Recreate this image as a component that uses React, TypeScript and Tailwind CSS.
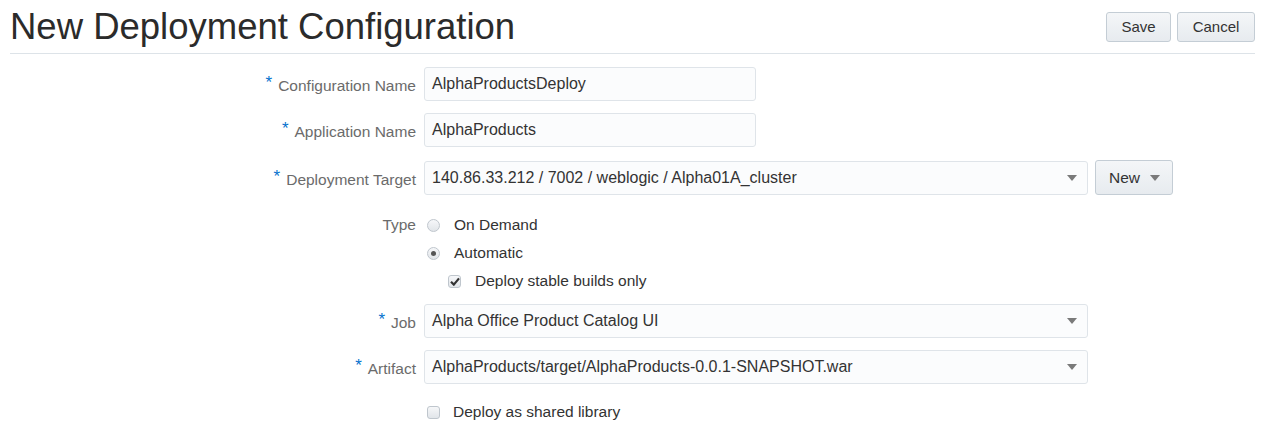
import { ReactNode } from "react";

const font = { fontFamily: '"Liberation Sans", Arial, sans-serif' };

const Caret = ({ className = "" }: { className?: string }) => (
    <svg width="10" height="6" viewBox="0 0 10 6" className={className}>
        <path d="M0 0 L10 0 L5 6 Z" fill="#7a7a7a" />
    </svg>
);

const Btn = ({ children, className = "" }: { children: ReactNode; className?: string }) => (
    <button
        className={`h-[30px] rounded-[3px] border border-[#c4cdd5] bg-gradient-to-b from-[#f4f6f8] to-[#e7ebef] text-[15px] text-[#333] ${className}`}
    >
        {children}
    </button>
);

const Label = ({ text, required }: { text: string; required?: boolean }) => (
    <div className="w-[424px] shrink-0 pr-2 text-right text-[15.5px] text-[#6b6b6b]">
        {required && <span className="mr-[6px] align-[3px] text-[17px] text-[#0572ce]">*</span>}
        {text}
    </div>
);

const TextField = ({ value }: { value: string }) => (
    <div className="flex h-[34px] w-[332px] items-center rounded-[3px] border border-[#dfe4e9] bg-[#fbfcfd] px-[7px] text-[16px] text-[#333]">
        {value}
    </div>
);

const SelectField = ({ value }: { value: string }) => (
    <div className="flex h-[34px] w-[664px] items-center justify-between rounded-[3px] border border-[#dfe4e9] bg-[#fbfcfd] pl-[7px] pr-[10px] text-[16px] text-[#333]">
        <span>{value}</span>
        <Caret />
    </div>
);

const Radio = ({ checked }: { checked?: boolean }) => (
    <span className="flex h-[13px] w-[13px] items-center justify-center rounded-full border border-[#bfc6cd] bg-gradient-to-b from-[#f6f7f9] to-[#e1e5e9]">
        {checked && <span className="h-[5px] w-[5px] rounded-full bg-[#555]" />}
    </span>
);

const Check = ({ checked }: { checked?: boolean }) => (
    <span className="flex h-[13px] w-[13px] items-center justify-center rounded-[3px] border border-[#bfc6cd] bg-gradient-to-b from-[#f6f7f9] to-[#e1e5e9]">
        {checked && (
            <svg width="10" height="9" viewBox="0 0 10 9">
                <path d="M1 4.8 L3.8 7.6 L9 1.4" stroke="#333" strokeWidth="2.2" fill="none" />
            </svg>
        )}
    </span>
);

export default function App() {
    return (
        <div className="h-[436px] w-[1261px] bg-white" style={font}>
            <div className="ml-[10px] mr-[6px] flex items-center justify-between border-b border-[#dde3e8] pb-[6px] pt-[7px]">
                <h1 className="text-[36.5px] leading-[40px] text-[#2b2b2b]">New Deployment Configuration</h1>
                <div className="flex gap-[6px]">
                    <Btn className="w-[65px]">Save</Btn>
                    <Btn className="w-[78px]">Cancel</Btn>
                </div>
            </div>

            <div className="flex flex-col pt-[13px]">
                <div className="flex items-center">
                    <Label text="Configuration Name" required />
                    <TextField value="AlphaProductsDeploy" />
                </div>
                <div className="mt-[12px] flex items-center">
                    <Label text="Application Name" required />
                    <TextField value="AlphaProducts" />
                </div>
                <div className="mt-[13px] flex h-[35px] items-center">
                    <Label text="Deployment Target" required />
                    <SelectField value="140.86.33.212 / 7002 / weblogic / Alpha01A_cluster" />
                    <button className="ml-[7px] flex h-[35px] w-[78px] items-center gap-[10px] rounded-[3px] border border-[#c4cdd5] bg-gradient-to-b from-[#f4f6f8] to-[#e7ebef] pl-[13px] text-[15.5px] text-[#333]">
                        New
                        <Caret />
                    </button>
                </div>

                <div className="mt-[16px] flex h-[28px] items-center">
                    <Label text="Type" />
                    <div className="ml-[3px] flex items-center gap-[14px] text-[15.5px] text-[#333]">
                        <Radio />
                        On Demand
                    </div>
                </div>
                <div className="flex h-[28px] items-center">
                    <Label text="" />
                    <div className="ml-[3px] flex items-center gap-[14px] text-[15.5px] text-[#333]">
                        <Radio checked />
                        Automatic
                    </div>
                </div>
                <div className="flex h-[28px] items-center">
                    <Label text="" />
                    <div className="ml-[24px] flex items-center gap-[14px] text-[15.5px] text-[#333]">
                        <Check checked />
                        Deploy stable builds only
                    </div>
                </div>

                <div className="mt-[9px] flex items-center">
                    <Label text="Job" required />
                    <SelectField value="Alpha Office Product Catalog UI" />
                </div>
                <div className="mt-[12px] flex items-center">
                    <Label text="Artifact" required />
                    <SelectField value="AlphaProducts/target/AlphaProducts-0.0.1-SNAPSHOT.war" />
                </div>
                <div className="mt-[14px] flex h-[28px] items-center">
                    <Label text="" />
                    <div className="ml-[3px] flex items-center gap-[13px] text-[15.5px] text-[#333]">
                        <Check />
                        Deploy as shared library
                    </div>
                </div>
            </div>
        </div>
    );
}
